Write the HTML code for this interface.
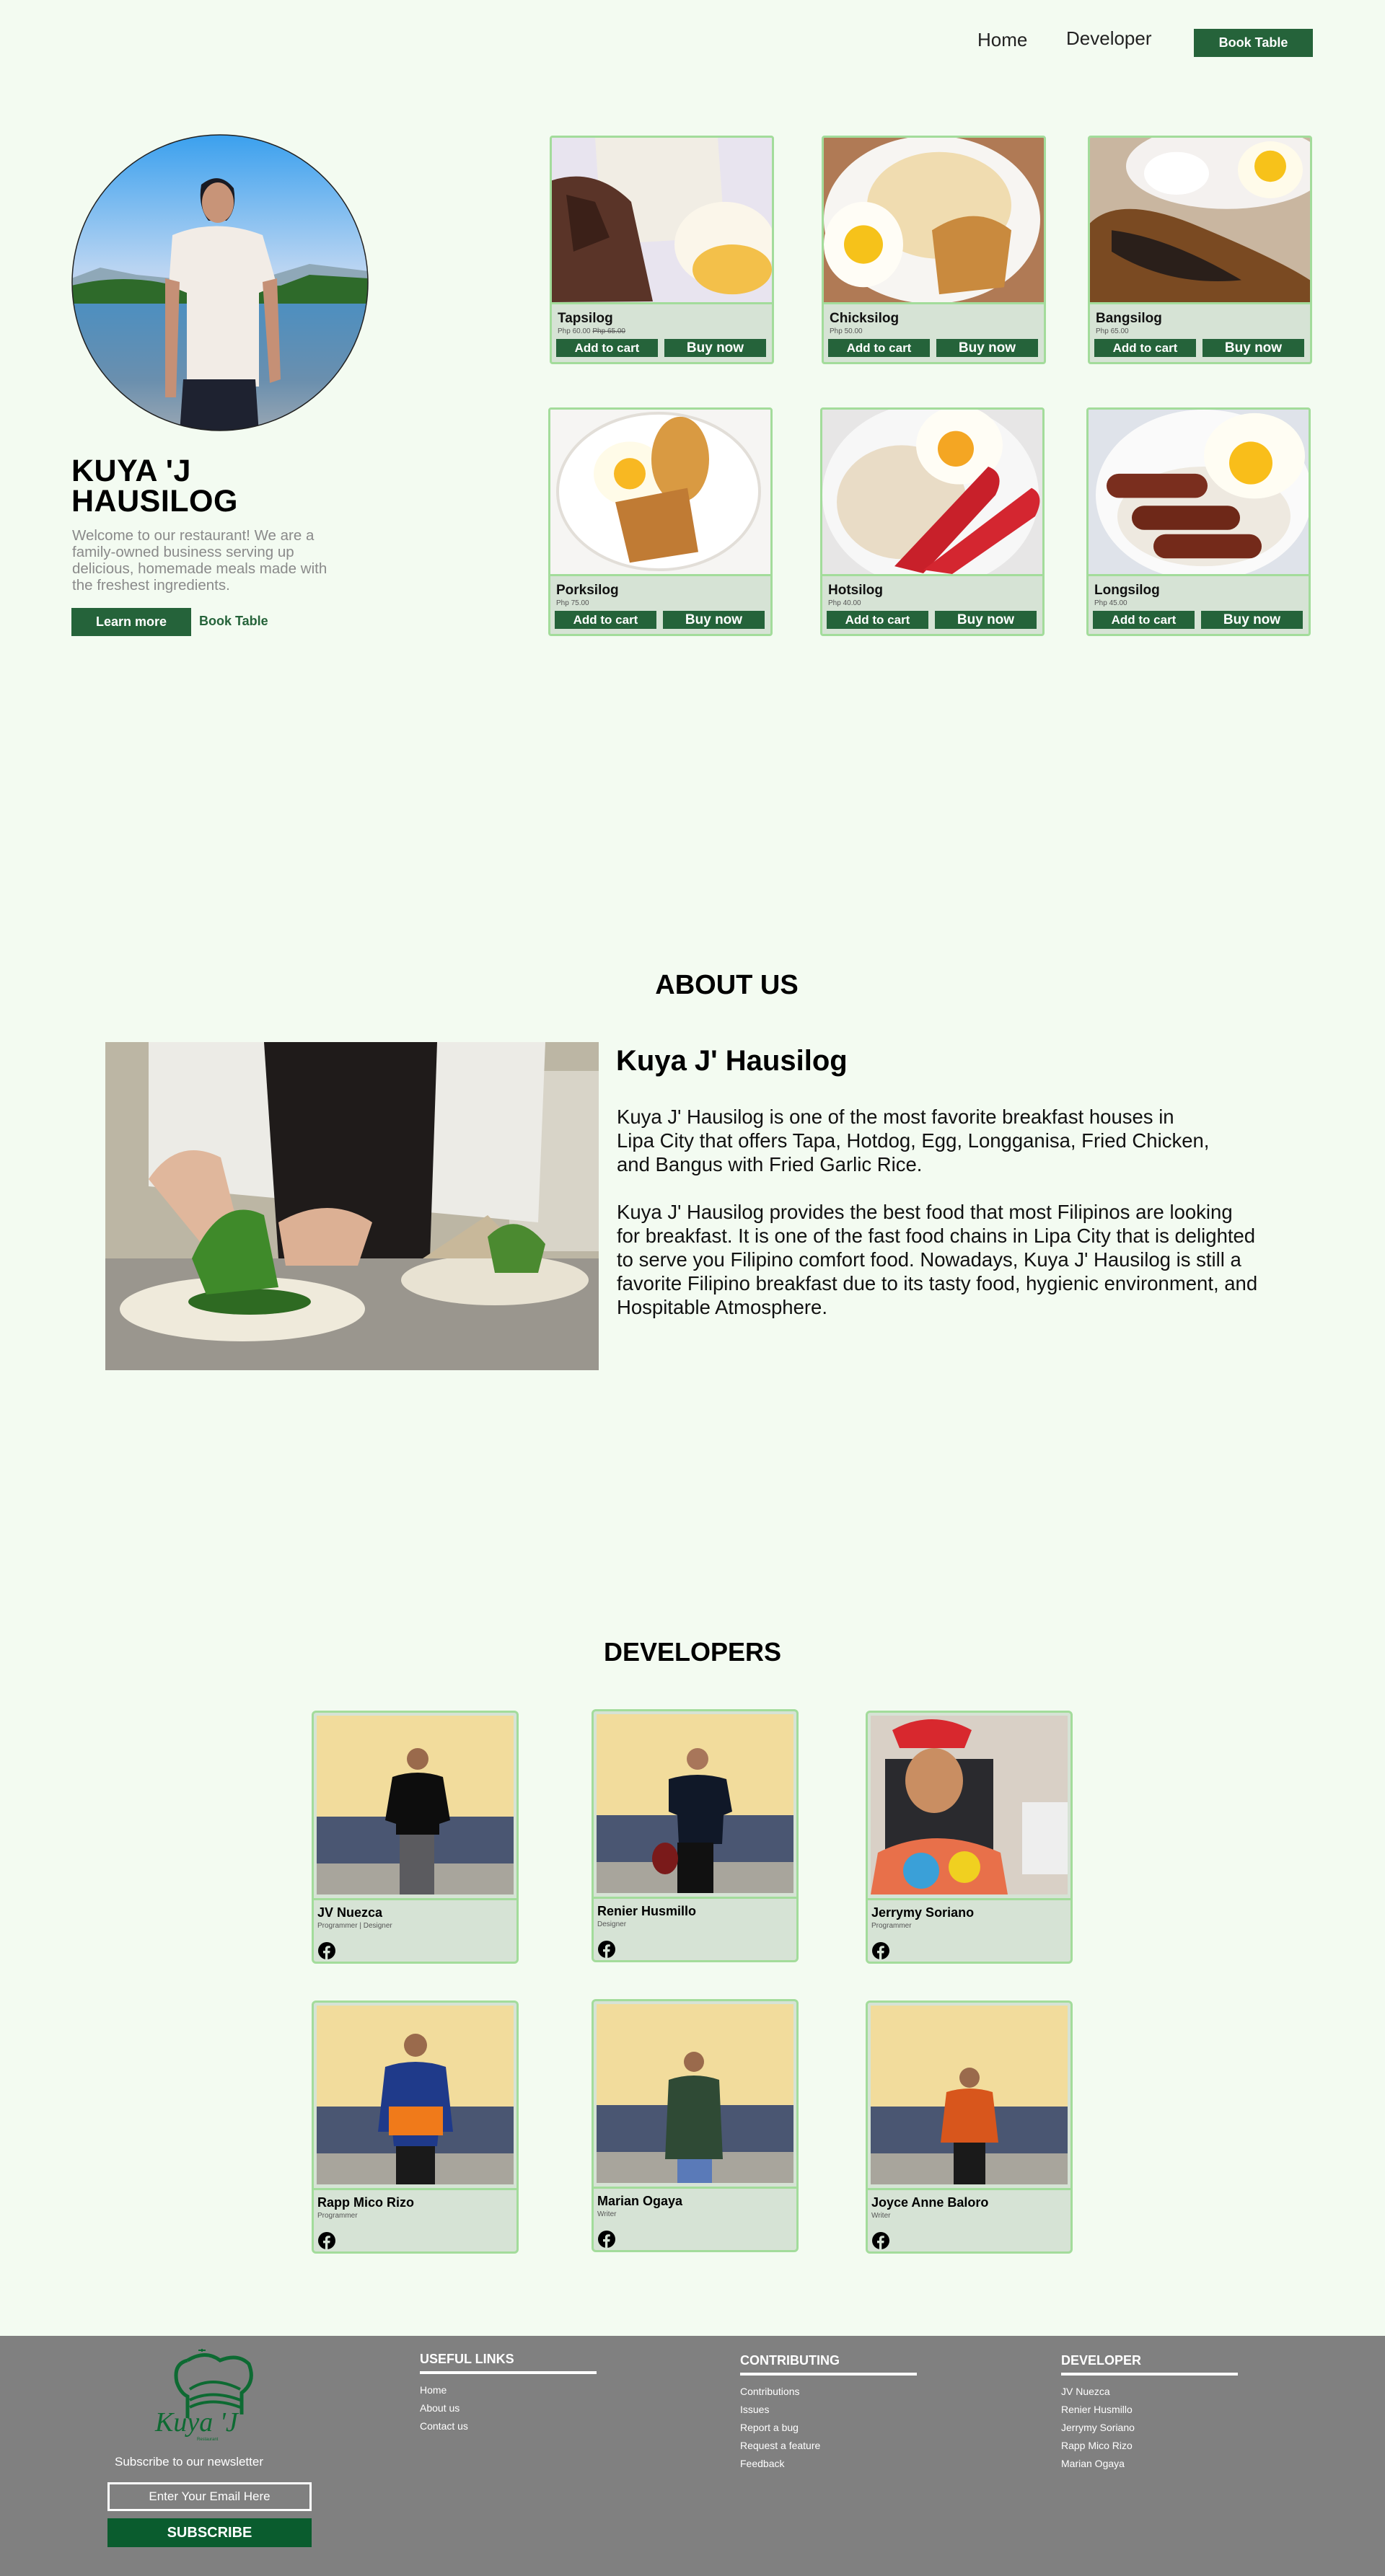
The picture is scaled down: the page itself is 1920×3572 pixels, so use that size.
<!DOCTYPE html>
<html><head><meta charset="utf-8">
<style>
*{margin:0;padding:0;box-sizing:border-box}
body{width:1920px;height:3572px;background:#f3fbf1;font-family:"Liberation Sans",sans-serif;position:relative;overflow:hidden;color:#000}
.a{position:absolute}
.nav{font-size:26px;color:#222}
.btn{background:#25633a;color:#fff;font-weight:bold;display:flex;align-items:center;justify-content:center}
.fc{position:absolute;width:311px;height:317px;border:3px solid #a3dc9b;border-radius:4px;background:#d6e3d5;overflow:hidden}
.fc .img{position:absolute;left:0;top:0;width:100%;height:231px;border-bottom:3px solid #a3dc9b}
.fc .nm{position:absolute;left:8px;top:240px;font-size:19px;font-weight:bold;color:#111}
.fc .pr{position:absolute;left:8px;top:263px;font-size:10px;color:#555}
.fc .b1,.fc .b2{position:absolute;top:279px;height:25px;width:141px;font-size:17px}
.fc .b1{left:6px}.fc .b2{left:156px;font-size:19px}
.dc{position:absolute;width:287px;height:351px;border:3px solid #a3dc9b;border-radius:6px;background:#d6e3d5;overflow:hidden}
.dc .img{position:absolute;left:4px;top:4px;width:273px;height:248px}
.dc .sep{position:absolute;left:0;top:257px;width:100%;height:3px;background:#a3dc9b}
.dc .nm{position:absolute;left:5px;top:267px;font-size:18px;font-weight:bold}
.dc .rl{position:absolute;left:5px;top:290px;font-size:10px;color:#555}
.dc svg.fb{position:absolute;left:6px;top:318px}
.ft{color:#fff}
.fh{font-size:18px;font-weight:bold;color:#fff}
.fl{font-size:14px;color:#fff}
.ul{height:4px;background:#fff;width:245px}
</style></head><body>

<!-- NAV -->
<div class="a nav" style="left:1355px;top:40px">Home</div>
<div class="a nav" style="left:1478px;top:38px">Developer</div>
<div class="a btn" style="left:1655px;top:40px;width:165px;height:39px;font-size:18px">Book Table</div>

<!-- HERO circle -->
<svg class="a" style="left:99px;top:186px" width="412" height="412" viewBox="0 0 412 412">
<defs><clipPath id="cc"><circle cx="206" cy="206" r="205"/></clipPath>
<linearGradient id="sky" x1="0" y1="0" x2="0" y2="1"><stop offset="0" stop-color="#3aa0ee"/><stop offset=".45" stop-color="#b8d4f2"/><stop offset=".6" stop-color="#d8d6ee"/></linearGradient>
<linearGradient id="sea" x1="0" y1="0" x2="0" y2="1"><stop offset="0" stop-color="#4d8fc0"/><stop offset=".6" stop-color="#6a8fae"/><stop offset="1" stop-color="#9aa7b3"/></linearGradient></defs>
<g clip-path="url(#cc)">
<rect width="412" height="412" fill="url(#sky)"/>
<path d="M0 200 L40 185 L90 195 L140 200 L200 190 L280 195 L330 180 L412 190 L412 225 L0 225Z" fill="#8fa8b8"/>
<path d="M0 210 Q60 195 120 205 L170 215 L290 210 L330 195 L412 200 L412 240 L0 240Z" fill="#2e6a2a"/>
<rect y="235" width="412" height="177" fill="url(#sea)"/>
<path d="M180 70 q25-20 45 5 q5 30-10 45 l-25 0 q-15-20-10-50z" fill="#1a1a22"/>
<ellipse cx="203" cy="95" rx="22" ry="28" fill="#c89478"/>
<path d="M140 140 q60-25 125 0 l20 70 -25 10 0 130 -100 0 0-130 -25-10z" fill="#f2ece6"/>
<path d="M155 340 l100 0 5 75 -110 0z" fill="#1e2230"/>
<path d="M130 200 l20 5 -5 160 -15 0z M265 205 l20-5 5 140 -15 5z" fill="#c59076"/>
</g>
<circle cx="206" cy="206" r="205" fill="none" stroke="#222" stroke-width="1.5"/>
</svg>

<div class="a" style="left:99px;top:632px;font-size:43px;font-weight:bold;line-height:42px;letter-spacing:.5px">KUYA 'J<br>HAUSILOG</div>
<div class="a" style="left:100px;top:731px;width:460px;font-size:20.5px;line-height:23px;color:#8a8a8a">Welcome to our restaurant! We are a<br>family-owned business serving up<br>delicious, homemade meals made with<br>the freshest ingredients.</div>
<div class="a btn" style="left:99px;top:843px;width:166px;height:39px;font-size:18px">Learn more</div>
<div class="a" style="left:276px;top:851px;font-size:18px;color:#25633a;font-weight:bold">Book Table</div>

<!-- FOOD CARDS -->
<div class="fc" style="left:762px;top:188px">
<svg class="img" viewBox="0 0 305 231" preserveAspectRatio="none"><rect width="305" height="231" fill="#e8e4ef"/><path d="M60 0 L230 0 L240 140 L70 150Z" fill="#f1ede4"/><path d="M0 60 Q60 40 110 90 L140 230 L0 231Z" fill="#5a3428"/><path d="M20 80 l40 10 20 50 -50 20z" fill="#3b2018"/><ellipse cx="240" cy="150" rx="70" ry="60" fill="#fbf6ea"/><ellipse cx="250" cy="185" rx="55" ry="35" fill="#f3c04a"/></svg>
<div class="nm">Tapsilog</div><div class="pr">Php 60.00 <s>Php 65.00</s></div>
<div class="btn b1">Add to cart</div><div class="btn b2">Buy now</div></div>

<div class="fc" style="left:1139px;top:188px">
<svg class="img" viewBox="0 0 305 231" preserveAspectRatio="none"><rect width="305" height="231" fill="#b07a55"/><ellipse cx="150" cy="115" rx="150" ry="118" fill="#f7f5f2"/><ellipse cx="160" cy="95" rx="100" ry="75" fill="#f0dcb0"/><ellipse cx="55" cy="150" rx="55" ry="60" fill="#fffdf6"/><circle cx="55" cy="150" r="27" fill="#f6c21a"/><path d="M150 130 q60-40 110 0 l-10 80 -90 10z" fill="#c98a3e"/></svg>
<div class="nm">Chicksilog</div><div class="pr">Php 50.00</div>
<div class="btn b1">Add to cart</div><div class="btn b2">Buy now</div></div>

<div class="fc" style="left:1508px;top:188px">
<svg class="img" viewBox="0 0 305 231" preserveAspectRatio="none"><rect width="305" height="231" fill="#c9b6a0"/><ellipse cx="190" cy="40" rx="140" ry="60" fill="#f4f1ef"/><ellipse cx="120" cy="50" rx="45" ry="30" fill="#fff"/><ellipse cx="250" cy="45" rx="45" ry="40" fill="#fffbea"/><circle cx="250" cy="40" r="22" fill="#f7c21a"/><path d="M0 120 Q40 80 140 120 Q260 170 305 200 L305 231 L0 231Z" fill="#7a4a22"/><path d="M30 130 q80 10 180 70 q-100 10-180-40z" fill="#2a1f1a"/></svg>
<div class="nm">Bangsilog</div><div class="pr">Php 65.00</div>
<div class="btn b1">Add to cart</div><div class="btn b2">Buy now</div></div>

<div class="fc" style="left:760px;top:565px">
<svg class="img" viewBox="0 0 305 231" preserveAspectRatio="none"><rect width="305" height="231" fill="#f6f5f3"/><ellipse cx="150" cy="115" rx="140" ry="110" fill="#fff" stroke="#e2ded8" stroke-width="4"/><ellipse cx="110" cy="90" rx="50" ry="45" fill="#fffbe8"/><circle cx="110" cy="90" r="22" fill="#f8b822"/><ellipse cx="180" cy="70" rx="40" ry="60" fill="#d99a42"/><path d="M90 130 L190 110 L205 200 L110 215Z" fill="#c07b34"/></svg>
<div class="nm">Porksilog</div><div class="pr">Php 75.00</div>
<div class="btn b1">Add to cart</div><div class="btn b2">Buy now</div></div>

<div class="fc" style="left:1137px;top:565px">
<svg class="img" viewBox="0 0 305 231" preserveAspectRatio="none"><rect width="305" height="231" fill="#e7e6e6"/><ellipse cx="150" cy="120" rx="150" ry="130" fill="#f7f7f7"/><ellipse cx="110" cy="130" rx="90" ry="80" fill="#e9dcc6"/><ellipse cx="190" cy="50" rx="60" ry="55" fill="#fffdf5"/><circle cx="185" cy="55" r="25" fill="#f4a623"/><path d="M230 80 q25 10 10 40 L140 230 L100 220Z" fill="#c8202a"/><path d="M290 110 q20 10 5 40 L180 231 L140 225Z" fill="#d42630"/></svg>
<div class="nm">Hotsilog</div><div class="pr">Php 40.00</div>
<div class="btn b1">Add to cart</div><div class="btn b2">Buy now</div></div>

<div class="fc" style="left:1506px;top:565px">
<svg class="img" viewBox="0 0 305 231" preserveAspectRatio="none"><rect width="305" height="231" fill="#dfe3ea"/><ellipse cx="160" cy="120" rx="150" ry="120" fill="#fafafa"/><ellipse cx="160" cy="150" rx="120" ry="70" fill="#eee9e0"/><ellipse cx="230" cy="65" rx="70" ry="60" fill="#fffdf3"/><circle cx="225" cy="75" r="30" fill="#f9be1a"/><rect x="25" y="90" width="140" height="34" rx="17" fill="#7a2e1e"/><rect x="60" y="135" width="150" height="34" rx="17" fill="#6e2818"/><rect x="90" y="175" width="150" height="34" rx="17" fill="#742a1a"/></svg>
<div class="nm">Longsilog</div><div class="pr">Php 45.00</div>
<div class="btn b1">Add to cart</div><div class="btn b2">Buy now</div></div>

<!-- ABOUT -->
<div class="a" style="left:0;width:2015px;text-align:center;top:1345px;font-size:38px;font-weight:bold">ABOUT US</div>
<svg class="a" style="left:146px;top:1445px" width="684" height="455" viewBox="0 0 684 455">
<rect width="684" height="455" fill="#8a857a"/>
<rect width="684" height="300" fill="#bcb6a4"/>
<rect x="560" y="40" width="124" height="250" fill="#d8d4c8"/>
<path d="M60 0 L610 0 L600 250 L60 200Z" fill="#ecebe6"/>
<path d="M220 0 L460 0 L450 300 L240 300Z" fill="#1f1b1a"/>
<rect y="300" width="684" height="155" fill="#9a968e"/>
<path d="M60 190 q40-60 100-30 l30 120 -40 20z" fill="#e0b79c"/>
<path d="M240 250 q70-40 130 0 l-20 60 -100 0z" fill="#dcb094"/>
<ellipse cx="190" cy="370" rx="170" ry="45" fill="#efeadb"/>
<ellipse cx="200" cy="360" rx="85" ry="18" fill="#2e6a22"/>
<path d="M120 300 q40-90 100-60 l20 100 -100 10z" fill="#3f8a2a"/>
<ellipse cx="540" cy="330" rx="130" ry="35" fill="#e8e2d2"/>
<path d="M440 300 l90-60 60 60z" fill="#c8b89a"/>
<path d="M530 270 q40-40 80 10 l-10 40 -60 0z" fill="#4b8a30"/>
</svg>
<div class="a" style="left:854px;top:1449px;font-size:40px;font-weight:bold">Kuya J' Hausilog</div>
<div class="a" style="left:855px;top:1532px;width:1000px;font-size:27.5px;line-height:33px;color:#111">Kuya J' Hausilog is one of the most favorite breakfast houses in<br>Lipa City that offers Tapa, Hotdog, Egg, Longganisa, Fried Chicken,<br>and Bangus with Fried Garlic Rice.<br><br>Kuya J' Hausilog provides the best food that most Filipinos are looking<br>for breakfast. It is one of the fast food chains in Lipa City that is delighted<br>to serve you Filipino comfort food. Nowadays, Kuya J' Hausilog is still a<br>favorite Filipino breakfast due to its tasty food, hygienic environment, and<br>Hospitable Atmosphere.</div>

<!-- DEVELOPERS -->
<div class="a" style="left:0;width:1920px;text-align:center;top:2270px;font-size:36px;font-weight:bold">DEVELOPERS</div>

<svg width="0" height="0" style="position:absolute">
<defs>
<symbol id="wall" viewBox="0 0 273 248" preserveAspectRatio="none">
<rect width="273" height="140" fill="#f2dc9c"/><rect y="140" width="273" height="70" fill="#4a5672"/><rect y="205" width="273" height="43" fill="#a8a59c"/>
</symbol>
<symbol id="fbi" viewBox="0 0 24 24"><circle cx="12" cy="12" r="12" fill="#000"/><path d="M13.3 24v-8.6h2.9l.4-3.4h-3.3V9.9c0-1 .3-1.6 1.7-1.6h1.8V5.3c-.3 0-1.4-.1-2.6-.1-2.6 0-4.3 1.6-4.3 4.4V12H7v3.4h2.9V24z" fill="#d6e3d5"/></symbol>
</defs></svg>

<div class="dc" style="left:432px;top:2372px"><svg class="img" viewBox="0 0 273 248" preserveAspectRatio="none"><use href="#wall"/><circle cx="140" cy="60" r="15" fill="#9a6a4c"/><path d="M105 85 q35-12 70 0 l10 60 -15 5 0 15 -60 0 0-15 -15-5z" fill="#0d0d0d"/><rect x="115" y="165" width="48" height="83" fill="#5b5b5f"/></svg><div class="sep"></div><div class="nm">JV Nuezca</div><div class="rl">Programmer | Designer</div><svg class="fb" width="24" height="24"><use href="#fbi"/></svg></div>

<div class="dc" style="left:820px;top:2370px"><svg class="img" viewBox="0 0 273 248" preserveAspectRatio="none"><use href="#wall"/><circle cx="140" cy="62" r="15" fill="#a8765a"/><path d="M100 90 q40-12 80 0 l8 45 -12 5 -2 40 -60 0 -2-40 -12-5z" fill="#101828"/><rect x="112" y="178" width="50" height="70" fill="#111"/><ellipse cx="95" cy="200" rx="18" ry="22" fill="#7a1a1a"/></svg><div class="sep"></div><div class="nm">Renier Husmillo</div><div class="rl">Designer</div><svg class="fb" width="24" height="24"><use href="#fbi"/></svg></div>

<div class="dc" style="left:1200px;top:2372px"><svg class="img" viewBox="0 0 273 248" preserveAspectRatio="none"><rect width="273" height="248" fill="#d9d0c6"/><rect x="210" y="120" width="63" height="100" fill="#eee"/><rect x="20" y="60" width="150" height="188" fill="#2a2a2e"/><path d="M30 20 q55-30 110 0 l-10 25 -90 0z" fill="#d8282e"/><ellipse cx="88" cy="90" rx="40" ry="45" fill="#c98e62"/><path d="M10 190 q80-40 170 0 l10 58 -190 0z" fill="#e8704a"/><circle cx="70" cy="215" r="25" fill="#3aa0d8"/><circle cx="130" cy="210" r="22" fill="#f0d020"/></svg><div class="sep"></div><div class="nm">Jerrymy Soriano</div><div class="rl">Programmer</div><svg class="fb" width="24" height="24"><use href="#fbi"/></svg></div>

<div class="dc" style="left:432px;top:2774px"><svg class="img" viewBox="0 0 273 248" preserveAspectRatio="none"><use href="#wall"/><circle cx="137" cy="55" r="16" fill="#9a6a4c"/><path d="M95 85 q42-14 84 0 l10 90 -20 0 -2 20 -60 0 -2-20 -20 0z" fill="#1f3a8a"/><path d="M100 140 l75 0 0 40 -75 0z" fill="#f07a1a"/><rect x="110" y="195" width="54" height="53" fill="#1a1a1a"/></svg><div class="sep"></div><div class="nm">Rapp Mico Rizo</div><div class="rl">Programmer</div><svg class="fb" width="24" height="24"><use href="#fbi"/></svg></div>

<div class="dc" style="left:820px;top:2772px"><svg class="img" viewBox="0 0 273 248" preserveAspectRatio="none"><use href="#wall"/><circle cx="135" cy="80" r="14" fill="#9a6a4c"/><path d="M100 105 q35-12 70 0 l5 110 -80 0z" fill="#2f4a35"/><rect x="112" y="215" width="48" height="33" fill="#5a7ab8"/></svg><div class="sep"></div><div class="nm">Marian Ogaya</div><div class="rl">Writer</div><svg class="fb" width="24" height="24"><use href="#fbi"/></svg></div>

<div class="dc" style="left:1200px;top:2774px"><svg class="img" viewBox="0 0 273 248" preserveAspectRatio="none"><use href="#wall"/><circle cx="137" cy="100" r="14" fill="#9a6a4c"/><path d="M105 120 q32-10 64 0 l8 70 -80 0z" fill="#d8561c"/><rect x="115" y="190" width="44" height="58" fill="#1a1a1a"/></svg><div class="sep"></div><div class="nm">Joyce Anne Baloro</div><div class="rl">Writer</div><svg class="fb" width="24" height="24"><use href="#fbi"/></svg></div>

<!-- FOOTER -->
<div class="a" style="left:0;top:3239px;width:1920px;height:333px;background:#808080"></div>
<svg class="a" style="left:205px;top:3253px" width="175" height="135" viewBox="0 0 175 135">
<path d="M75 4 l0 4 M70 6 l10 0" stroke="#0d6a32" stroke-width="2"/>
<path d="M55 20 q-20 5-15 30 q5 15 15 20 l0 30 M55 20 q25-15 45 0 q25-10 40 5 q10 25-10 40 l0 30" fill="none" stroke="#0d6a32" stroke-width="5"/>
<path d="M58 60 q30-20 70 0 M58 85 q30-15 70 0 M58 75 q30-15 70 0" fill="none" stroke="#0d6a32" stroke-width="4"/>
<text x="10" y="118" font-family="Liberation Serif,serif" font-style="italic" font-size="38" fill="#0d6a32">Kuya 'J</text>
<text x="68" y="131" font-family="Liberation Sans,sans-serif" font-size="6" fill="#0d6a32">Restaurant</text>
</svg>
<div class="a ft" style="left:159px;top:3404px;font-size:17px">Subscribe to our newsletter</div>
<div class="a" style="left:149px;top:3442px;width:283px;height:40px;border:3px solid #fff;color:#fff;font-size:17px;display:flex;align-items:center;justify-content:center">Enter Your Email Here</div>
<div class="a" style="left:149px;top:3492px;width:283px;height:40px;background:#0a5c2e;color:#fff;font-weight:bold;font-size:20px;display:flex;align-items:center;justify-content:center">SUBSCRIBE</div>

<div class="a fh" style="left:582px;top:3261px">USEFUL LINKS</div>
<div class="a ul" style="left:582px;top:3288px"></div>
<div class="a fl" style="left:582px;top:3306px">Home</div>
<div class="a fl" style="left:582px;top:3331px">About us</div>
<div class="a fl" style="left:582px;top:3356px">Contact us</div>

<div class="a fh" style="left:1026px;top:3263px">CONTRIBUTING</div>
<div class="a ul" style="left:1026px;top:3290px"></div>
<div class="a fl" style="left:1026px;top:3308px">Contributions</div>
<div class="a fl" style="left:1026px;top:3333px">Issues</div>
<div class="a fl" style="left:1026px;top:3358px">Report a bug</div>
<div class="a fl" style="left:1026px;top:3383px">Request a feature</div>
<div class="a fl" style="left:1026px;top:3408px">Feedback</div>

<div class="a fh" style="left:1471px;top:3263px">DEVELOPER</div>
<div class="a ul" style="left:1471px;top:3290px"></div>
<div class="a fl" style="left:1471px;top:3308px">JV Nuezca</div>
<div class="a fl" style="left:1471px;top:3333px">Renier Husmillo</div>
<div class="a fl" style="left:1471px;top:3358px">Jerrymy Soriano</div>
<div class="a fl" style="left:1471px;top:3383px">Rapp Mico Rizo</div>
<div class="a fl" style="left:1471px;top:3408px">Marian Ogaya</div>

</body></html>
